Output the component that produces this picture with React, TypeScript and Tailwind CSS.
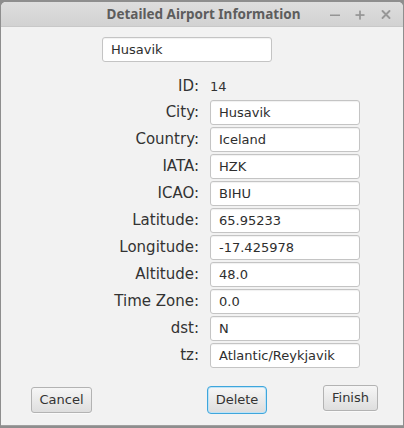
import React from "react";

const rows: [string, string][] = [
  ["City:", "Husavik"],
  ["Country:", "Iceland"],
  ["IATA:", "HZK"],
  ["ICAO:", "BIHU"],
  ["Latitude:", "65.95233"],
  ["Longitude:", "-17.425978"],
  ["Altitude:", "48.0"],
  ["Time Zone:", "0.0"],
  ["dst:", "N"],
  ["tz:", "Atlantic/Reykjavik"],
];

const field =
  "h-[25px] bg-white border border-[#c4c4c4] rounded-[3px] shadow-[inset_0_1px_1px_rgba(0,0,0,0.06)] flex items-center pl-[8px] text-[13px] text-[#2e2e2e]";

const btn =
  "h-[26px] rounded-[3px] border border-[#b3b3b3] bg-gradient-to-b from-[#f6f6f6] to-[#dedede] text-[13px] text-[#333] flex items-center justify-center shadow-[0_1px_0_rgba(255,255,255,0.6)]";

export default function App() {
  return (
    <div
      className="w-[404px] h-[428px] bg-[#8e8e8e] pt-[2px] pl-[1px] pr-[1px] overflow-hidden"
      style={{ fontFamily: '"DejaVu Sans", sans-serif' }}
    >
      <div className="w-[402px] h-[424px] bg-[#f2f2f2] rounded-t-[5px] overflow-hidden flex flex-col border-b border-[#a0a0a0]">
        {/* title bar */}
        <div className="h-[25px] bg-gradient-to-b from-[#dedede] to-[#d2d2d2] border-b border-[#c8c8c8] flex items-center relative">
          <div
            className="absolute left-0 right-0 top-0 h-[25px] flex items-center justify-center text-[13.5px] font-bold text-[#5d5d5d]"
            style={{ fontFamily: '"Noto Sans", "Open Sans", sans-serif' }}
          >
            <span className="ml-[3px]">Detailed Airport Information</span>
          </div>
          <div className="absolute top-0 h-[25px] left-[328px] flex items-center">
            <svg width="12" height="12" viewBox="0 0 12 12">
              <rect x="1" y="5.5" width="10" height="1.5" fill="#959595" />
            </svg>
          </div>
          <div className="absolute top-0 h-[25px] left-[353px] flex items-center">
            <svg width="12" height="12" viewBox="0 0 12 12">
              <rect x="1.5" y="5.2" width="9" height="1.7" fill="#959595" />
              <rect x="5.15" y="1.6" width="1.7" height="9" fill="#959595" />
            </svg>
          </div>
          <div className="absolute top-0 h-[25px] left-[379px] flex items-center">
            <svg width="12" height="12" viewBox="0 0 12 12">
              <path d="M2.5 2 L9.5 9 M9.5 2 L2.5 9" stroke="#979797" strokeWidth="1.9" strokeLinecap="round" />
            </svg>
          </div>
        </div>

        {/* top field */}
        <div className="mt-[10px] ml-[101px]">
          <div className={`${field} w-[170px]`}>Husavik</div>
        </div>

        {/* form */}
        <div className="mt-[13px] ml-[99px] grid grid-cols-[99px_150px] gap-x-[11px] gap-y-[2px] items-center">
          <div className="h-[23px] flex items-center justify-end text-[15px] text-[#333]">ID:</div>
          <div className="h-[23px] flex items-center text-[13px] text-[#333]">14</div>
          {rows.map(([label, value]) => (
            <React.Fragment key={label}>
              <div className="h-[25px] flex items-center justify-end text-[15px] text-[#333] whitespace-nowrap">
                {label}
              </div>
              <div className={field}>{value}</div>
            </React.Fragment>
          ))}
        </div>

        {/* buttons */}
        <div className="flex items-start mt-[18px]">
          <div className={`${btn} ml-[30px] w-[61px] mt-[1px]`}>Cancel</div>
          <div className="ml-[115px] mt-[0px] rounded-[4px] border border-[#3fa6dc] p-[1px] bg-[#bfe3f6]">
            <div className="h-[24px] w-[56px] rounded-[2px] bg-gradient-to-b from-[#f6f6f6] to-[#dedede] text-[13px] text-[#333] flex items-center justify-center">
              Delete
            </div>
          </div>
          <div className={`${btn} ml-[56px] w-[55px] -mt-[1px]`}>Finish</div>
        </div>
      </div>
    </div>
  );
}
